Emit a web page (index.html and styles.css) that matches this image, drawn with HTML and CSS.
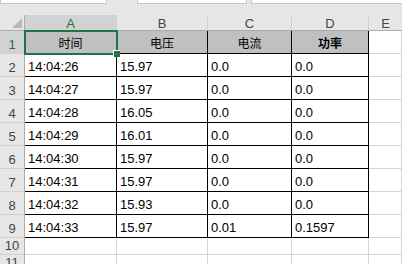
FILE: index.html
```html
<!DOCTYPE html>
<html lang="zh">
<head>
<meta charset="utf-8">
<link rel="stylesheet" href="styles.css">
</head>
<body>
<div class="top">
  <div class="box b1"></div>
  <div class="box b2"></div>
  <div class="box b3"></div>
</div>
<div class="sheet">
  <div class="ch corner"><span class="tri"></span></div>
  <div class="ch sel">A</div>
  <div class="ch">B</div>
  <div class="ch">C</div>
  <div class="ch">D</div>
  <div class="ch last">E</div>

  <div class="rh sel">1</div>
  <div class="c t hd a1">时间<span class="selbox"><span class="handle"></span></span></div>
  <div class="c t hd">电压</div>
  <div class="c t hd">电流</div>
  <div class="c t hd bold">功率</div>
  <div class="c"></div>

  <div class="rh">2</div><div class="c t">14:04:26</div><div class="c t">15.97</div><div class="c t">0.0</div><div class="c t">0.0</div><div class="c"></div>
  <div class="rh">3</div><div class="c t">14:04:27</div><div class="c t">15.97</div><div class="c t">0.0</div><div class="c t">0.0</div><div class="c"></div>
  <div class="rh">4</div><div class="c t">14:04:28</div><div class="c t">16.05</div><div class="c t">0.0</div><div class="c t">0.0</div><div class="c"></div>
  <div class="rh">5</div><div class="c t">14:04:29</div><div class="c t">16.01</div><div class="c t">0.0</div><div class="c t">0.0</div><div class="c"></div>
  <div class="rh">6</div><div class="c t">14:04:30</div><div class="c t">15.97</div><div class="c t">0.0</div><div class="c t">0.0</div><div class="c"></div>
  <div class="rh">7</div><div class="c t">14:04:31</div><div class="c t">15.97</div><div class="c t">0.0</div><div class="c t">0.0</div><div class="c"></div>
  <div class="rh">8</div><div class="c t">14:04:32</div><div class="c t">15.93</div><div class="c t">0.0</div><div class="c t">0.0</div><div class="c"></div>
  <div class="rh">9</div><div class="c t">14:04:33</div><div class="c t">15.97</div><div class="c t">0.01</div><div class="c t">0.1597</div><div class="c"></div>

  <div class="rh">10</div><div class="c"></div><div class="c"></div><div class="c"></div><div class="c"></div><div class="c"></div>
  <div class="rh">11</div><div class="c"></div><div class="c"></div><div class="c"></div><div class="c"></div><div class="c"></div>
</div>
</body>
</html>
```

FILE: styles.css
```css
* { box-sizing: border-box; margin: 0; padding: 0; }
html, body { width: 402px; height: 264px; overflow: hidden; }
body {
  background: #e6e6e6;
  font-family: "Liberation Sans", "Noto Sans CJK SC", sans-serif;
  color: #000;
}
.top {
  height: 15px;
  position: relative;
  display: flex;
  align-items: flex-start;
}
.box {
  height: 4px;
  background: #fff;
  border: 1px solid #c6c6c6;
  border-top: none;
}
.b1 { width: 107px; }
.b2 { width: 110px; margin-left: 30px; }
.b3 { flex: 1; margin-left: 4px; border-right: none; }

.sheet {
  display: grid;
  grid-template-columns: 25px 92px 91px 84px 77px 1fr;
  grid-template-rows: 16px repeat(9, 23px) 17px 17px;
  background: #fff;
}
.ch {
  background: #e6e6e6;
  border-right: 1px solid #d0d0d0;
  border-bottom: 1px solid #ababab;
  font-size: 13px;
  color: #444;
  display: flex;
  align-items: center;
  justify-content: center;
  line-height: 1;
  padding-top: 1px;
}
.ch.last { border-right: none; }
.ch.sel { background: #d2d2d2; color: #217346; }
.corner { position: relative; border-right: 1px solid #ababab; }
.tri {
  position: absolute;
  right: 2px;
  bottom: 2px;
  width: 0; height: 0;
  border-left: 10px solid transparent;
  border-bottom: 10px solid #b7b7b7;
}
.rh {
  background: #e6e6e6;
  border-right: 1px solid #ababab;
  border-bottom: 1px solid #d0d0d0;
  font-size: 13px;
  color: #444;
  display: flex;
  align-items: flex-end;
  justify-content: center;
  padding-bottom: 2px;
  line-height: 1;
}
.rh.sel { background: #d2d2d2; color: #217346; }
.c {
  border-right: 1px solid #d4d4d4;
  border-bottom: 1px solid #d4d4d4;
  font-size: 13px;
  line-height: 1;
  display: flex;
  align-items: flex-end;
  padding: 0 0 3px 3px;
  white-space: nowrap;
}
.c.t { border-right-color: #000; border-bottom-color: #000; }
.c.hd {
  background: #c0c0c0;
  justify-content: center;
  padding-left: 0;
  font-size: 12px;
}
.c.bold { font-weight: bold; }
.a1 { position: relative; }
.selbox {
  position: absolute;
  left: -1px;
  top: -1px;
  width: 94px;
  height: 25px;
  border: 2px solid #217346;
}
.handle {
  position: absolute;
  right: -4px;
  bottom: -4px;
  width: 7px;
  height: 7px;
  background: #217346;
  border-left: 1px solid #fff;
  border-top: 1px solid #fff;
}
```
